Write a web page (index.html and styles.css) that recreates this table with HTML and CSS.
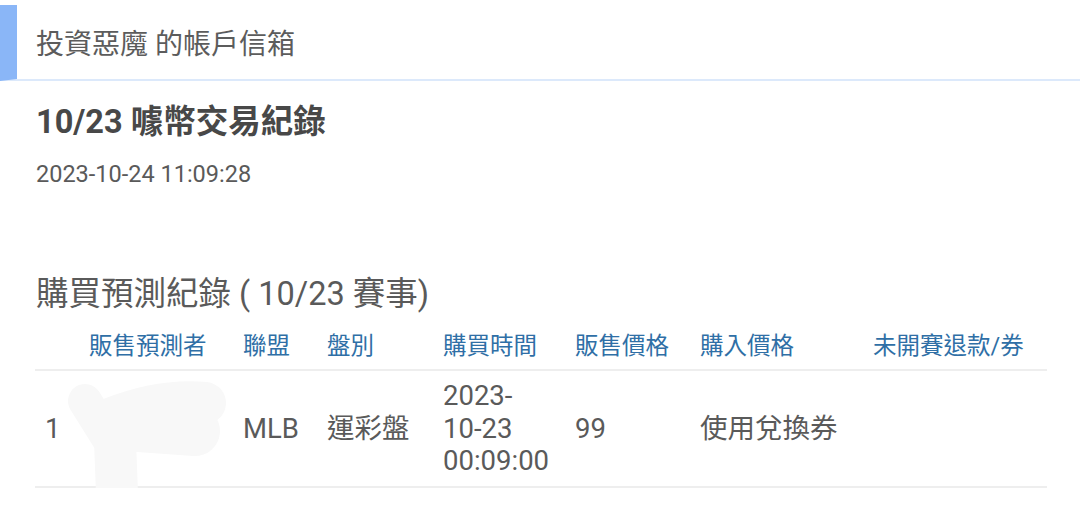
FILE: index.html
```html
<!DOCTYPE html>
<html lang="zh-Hant">
<head>
<meta charset="utf-8">
<title>投資惡魔 的帳戶信箱</title>
<link rel="stylesheet" href="styles.css">
</head>
<body>
<header class="mailbox-head">
  <h1 class="mailbox-title">投資惡魔 的帳戶信箱</h1>
</header>
<main class="content">
  <h2 class="msg-title">10/23 噱幣交易紀錄</h2>
  <div class="msg-date">2023-10-24 11:09:28</div>
  <h3 class="section-title">購買預測紀錄 ( 10/23 賽事)</h3>
  <table class="records">
    <colgroup>
      <col class="c-idx"><col class="c-seller"><col class="c-league"><col class="c-type">
      <col class="c-time"><col class="c-price"><col class="c-paid"><col class="c-refund">
    </colgroup>
    <thead>
      <tr>
        <th></th>
        <th>販售預測者</th>
        <th>聯盟</th>
        <th>盤別</th>
        <th>購買時間</th>
        <th>販售價格</th>
        <th>購入價格</th>
        <th>未開賽退款/券</th>
      </tr>
    </thead>
    <tbody>
      <tr>
        <td>1</td>
        <td class="seller">
          <svg class="redact" width="170" height="135" viewBox="0 0 170 135" aria-hidden="true">
            <g fill="none" stroke="#f8f8f8" stroke-linecap="round" stroke-linejoin="round">
              <path d="M20 20 L45 60" stroke-width="34"/>
              <path d="M45 38 Q95 18 140 22" stroke-width="42"/>
              <path d="M60 45 L130 50" stroke-width="50"/>
              <path d="M50 60 L52 112" stroke-width="42"/>
            </g>
          </svg>
        </td>
        <td>MLB</td>
        <td>運彩盤</td>
        <td>2023-<br>10-23<br>00:09:00</td>
        <td>99</td>
        <td>使用兌換券</td>
        <td></td>
      </tr>
    </tbody>
  </table>
</main>
</body>
</html>
```

FILE: styles.css
```css
html, body {
  margin: 0;
  padding: 0;
  background: #ffffff;
}

body {
  font-family: Roboto, "Noto Sans CJK TC", sans-serif;
  color: #555555;
}

.mailbox-head {
  margin-top: 5px;
  height: 68px;
  padding-top: 6px;
  border-left: 17px solid #8ab6f7;
  border-bottom: 2px solid #dce9fb;
  display: flex;
  align-items: center;
  padding-left: 19px;
}

.mailbox-title {
  margin: 0;
  font-size: 28px;
  font-weight: 400;
  line-height: 1.2;
  color: #5c5c5c;
}

.content {
  padding: 0 33px 0 35px;
}

.msg-title {
  margin: 22px 0 0 1px;
  font-size: 32.5px;
  line-height: 38px;
  font-weight: 700;
  color: #484848;
}

.msg-date {
  margin: 19px 0 0 1px;
  font-size: 23.5px;
  line-height: 28px;
  color: #5a5a5a;
}

.section-title {
  margin: 87px 0 0 1px;
  font-size: 32.5px;
  line-height: 38px;
  font-weight: 400;
  color: #5a5a5a;
}

.records {
  margin-top: 10px;
  width: 1012px;
  border-collapse: collapse;
  table-layout: fixed;
}

.c-idx { width: 44px; }
.c-seller { width: 154px; }
.c-league { width: 84px; }
.c-type { width: 116px; }
.c-time { width: 132px; }
.c-price { width: 125px; }
.c-paid { width: 173px; }
.c-refund { width: 184px; }

.records th {
  text-align: left;
  font-weight: 400;
  font-size: 23.5px;
  line-height: 30px;
  padding: 8px 10px;
  color: #2f6fa6;
  border-bottom: 2px solid #eeeeee;
  white-space: nowrap;
}

.records td {
  font-size: 27.5px;
  line-height: 32.5px;
  padding: 9px 10px 8px;
  color: #5a5a5a;
  vertical-align: middle;
  border-bottom: 2px solid #eeeeee;
}

.records td.seller {
  position: relative;
}

.redact {
  position: absolute;
  left: -14px;
  top: 10px;
  display: block;
}
```
